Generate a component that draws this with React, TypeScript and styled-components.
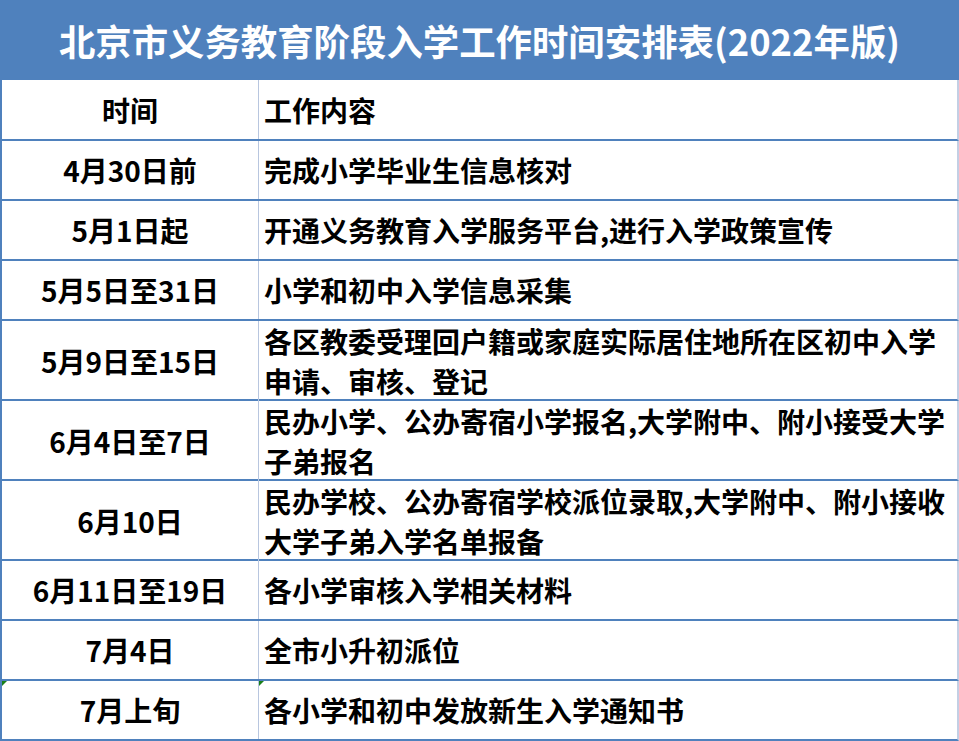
import * as React from 'react'
import styled, { createGlobalStyle } from 'styled-components'

interface Item {
  time: string
  work: string[]
  tall?: boolean
  flag?: boolean
}

const items: Item[] = [
  { time: '4月30日前', work: ['完成小学毕业生信息核对'] },
  { time: '5月1日起', work: ['开通义务教育入学服务平台,进行入学政策宣传'] },
  { time: '5月5日至31日', work: ['小学和初中入学信息采集'] },
  {
    time: '5月9日至15日',
    work: ['各区教委受理回户籍或家庭实际居住地所在区初中入学', '申请、审核、登记'],
    tall: true
  },
  {
    time: '6月4日至7日',
    work: ['民办小学、公办寄宿小学报名,大学附中、附小接受大学', '子弟报名'],
    tall: true
  },
  {
    time: '6月10日',
    work: ['民办学校、公办寄宿学校派位录取,大学附中、附小接收', '大学子弟入学名单报备'],
    tall: true
  },
  { time: '6月11日至19日', work: ['各小学审核入学相关材料'] },
  { time: '7月4日', work: ['全市小升初派位'] },
  { time: '7月上旬', work: ['各小学和初中发放新生入学通知书'], flag: true }
]

export default function App() {
  return (
    <React.Fragment>
      <GlobalStyle />
      <Sheet>
        <Title>北京市义务教育阶段入学工作时间安排表(2022年版)</Title>
        <Row first>
          <TimeCell>时间</TimeCell>
          <WorkCell>工作内容</WorkCell>
        </Row>
        {items.map(item => (
          <Row key={item.time} tall={item.tall}>
            <TimeCell flag={item.flag}>{item.time}</TimeCell>
            <WorkCell flag={item.flag}>
              {item.work.map(line => (
                <Line key={line}>{line}</Line>
              ))}
            </WorkCell>
          </Row>
        ))}
      </Sheet>
    </React.Fragment>
  )
}

const GlobalStyle = createGlobalStyle`
  body {
    margin: 0;
    background: #fff;
    font-family: "Noto Sans CJK SC", "Noto Sans", sans-serif;
  }
`

const Sheet = styled.div`
  width: 959px;
  display: flex;
  flex-direction: column;
`

const Title = styled.div`
  height: 80px;
  background: #4f81bd;
  color: #fff;
  font-size: 36.4px;
  font-weight: 700;
  display: flex;
  align-items: center;
  justify-content: center;
  padding-bottom: 1px;
  box-sizing: border-box;
  white-space: nowrap;
`

interface RowProps {
  tall?: boolean
  first?: boolean
}

const Row = styled.div<RowProps>`
  display: grid;
  grid-template-columns: 256px 1fr;
  height: ${props => (props.tall ? 80 : props.first ? 61 : 60)}px;
  box-sizing: border-box;
  border-left: 2px solid #4f81bd;
  border-right: 2px solid #c3cfe4;
  border-bottom: 2px solid #4f81bd;
`

interface CellProps {
  flag?: boolean
}

const Cell = styled.div<CellProps>`
  position: relative;
  display: flex;
  flex-direction: column;
  justify-content: center;
  font-size: 28px;
  font-weight: 700;
  color: #000;
  white-space: nowrap;

  &::before {
    content: '';
    display: ${props => (props.flag ? 'block' : 'none')};
    position: absolute;
    left: 0;
    top: 0;
    border-top: 5px solid #1a7f1a;
    border-right: 5px solid transparent;
  }
`

const TimeCell = styled(Cell)`
  align-items: center;
`

const WorkCell = styled(Cell)`
  border-left: 1px solid #b8c6df;
  padding-left: 5px;
`

const Line = styled.div`
  line-height: 40px;
`
